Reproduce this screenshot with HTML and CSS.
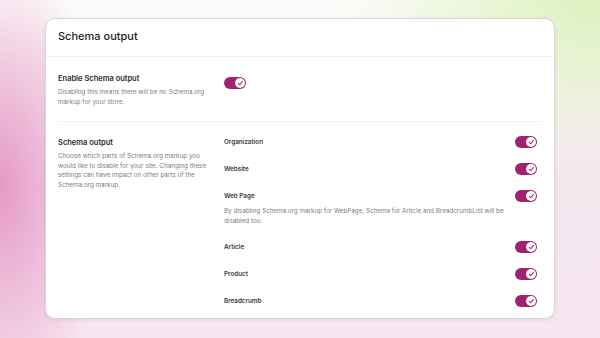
FILE: index.html
```html
<!DOCTYPE html>
<html lang="en">
<head>
    <meta charset="UTF-8">
    <meta name="viewport" content="width=device-width, initial-scale=1.0">
    <title>Schema output</title>
    <link rel="stylesheet" href="styles.css">
</head>
<body>
    <div class="card">
        <div class="card-header">
            <h1>Schema output</h1>
        </div>

        <div class="section">
            <div class="section-info">
                <h2>Enable Schema output</h2>
                <p>Disabling this means there will be no Schema.org markup for your store.</p>
            </div>
            <div class="section-controls">
                <span class="toggle"><span class="knob"></span></span>
            </div>
        </div>

        <div class="section last">
            <div class="section-info">
                <h2>Schema output</h2>
                <p>Choose which parts of Schema.org markup you would like to disable for your site. Changing these settings can have impact on other parts of the Schema.org markup.</p>
            </div>
            <div class="section-controls list">
                <div class="item">
                    <div class="item-row"><span>Organization</span><span class="toggle"><span class="knob"></span></span></div>
                </div>
                <div class="item">
                    <div class="item-row"><span>Website</span><span class="toggle"><span class="knob"></span></span></div>
                </div>
                <div class="item">
                    <div class="item-row"><span>Web Page</span><span class="toggle"><span class="knob"></span></span></div>
                    <p class="item-desc">By disabling Schema.org markup for WebPage, Schema for Article and BreadcrumbList will be disabled too.</p>
                </div>
                <div class="item">
                    <div class="item-row"><span>Article</span><span class="toggle"><span class="knob"></span></span></div>
                </div>
                <div class="item">
                    <div class="item-row"><span>Product</span><span class="toggle"><span class="knob"></span></span></div>
                </div>
                <div class="item">
                    <div class="item-row"><span>Breadcrumb</span><span class="toggle"><span class="knob"></span></span></div>
                </div>
            </div>
        </div>
    </div>
</body>
</html>
```

FILE: styles.css
```css
html, body {
    height: 100%;
}
body {
    margin: 0;
    font-family: Inter, "Noto Sans", sans-serif;
    background-color: #f6eef2;
    background-image:
        radial-gradient(ellipse 110px 230px at 0% 55%, rgba(228, 140, 192, 0.85), rgba(228, 140, 192, 0)),
        radial-gradient(ellipse 260px 160px at 100% 0%, rgba(216, 240, 182, 0.9), rgba(216, 240, 182, 0)),
        linear-gradient(180deg, #fcfcfa 0%, #f3e6ed 55%, #f6e6f0 100%);
    overflow: hidden;
}
.card {
    box-sizing: border-box;
    width: 510px;
    height: 301px;
    margin: 18px 0 0 45px;
    background-color: #fff;
    border: 1px solid #d9d5d8;
    border-radius: 10px;
    box-shadow: 0 1px 4px rgba(0, 0, 0, 0.07);
}
.card-header {
    height: 37px;
    display: flex;
    align-items: center;
    padding: 0 12px;
    border-bottom: 1px solid #f1f0f0;
}
h1 {
    margin: 0 0 4px;
    font-size: 11px;
    font-weight: 500;
    color: #1e1e2a;
}
.section {
    display: grid;
    grid-template-columns: 166px 1fr;
    margin: 0 12px;
    padding: 16px 0 14px;
    border-bottom: 1px solid #f1f0f0;
}
.section.last {
    padding-top: 15px;
    border-bottom: none;
}
.section-info {
    max-width: 150px;
}
h2 {
    margin: 0;
    font-size: 7.5px;
    line-height: 11px;
    font-weight: 600;
    color: #2a2a33;
}
.section-info p {
    margin: 4px 0 0;
    font-size: 6.3px;
    line-height: 9.5px;
    color: #7b7b86;
}
.list {
    display: flex;
    flex-direction: column;
    gap: 15px;
    margin-top: -1px;
    padding-right: 5px;
}
.item-row {
    display: flex;
    align-items: center;
    justify-content: space-between;
    font-size: 6.3px;
    font-weight: 600;
    color: #3a3a44;
}
.item-desc {
    max-width: 285px;
    margin: 5px 0 0;
    font-size: 6.3px;
    line-height: 9.5px;
    color: #7b7b86;
}
.toggle {
    position: relative;
    display: inline-block;
    width: 22px;
    height: 12px;
    border-radius: 6px;
    background-color: #a2226c;
}
.knob {
    position: absolute;
    right: 1px;
    top: 1px;
    width: 10px;
    height: 10px;
    border-radius: 50%;
    background-color: #fff;
}
.knob::after {
    content: "";
    position: absolute;
    left: 3.5px;
    top: 2.2px;
    width: 2px;
    height: 3.5px;
    border: solid #a2226c;
    border-width: 0 1px 1px 0;
    transform: rotate(40deg);
}
```
